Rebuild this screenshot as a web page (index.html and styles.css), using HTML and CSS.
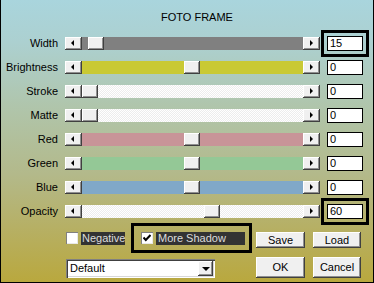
FILE: index.html
```html
<!DOCTYPE html>
<html>
<head>
<meta charset="utf-8">
<link rel="stylesheet" href="styles.css">
</head>
<body>
<div class="win">
  <div class="title">FOTO FRAME</div>
  <div class="rows">
    <div class="row">
      <div class="lbl">Width</div>
      <div class="slider">
        <div class="raised arrow"><span class="tri-l"></span></div>
        <div class="track t-gray"><div class="raised thumb" style="margin-left:6px"></div></div>
        <div class="raised arrow"><span class="tri-r"></span></div>
      </div>
      <div class="num hl">15</div>
    </div>
    <div class="row">
      <div class="lbl">Brightness</div>
      <div class="slider">
        <div class="raised arrow"><span class="tri-l"></span></div>
        <div class="track t-yellow"><div class="raised thumb" style="margin-left:102px"></div></div>
        <div class="raised arrow"><span class="tri-r"></span></div>
      </div>
      <div class="num">0</div>
    </div>
    <div class="row">
      <div class="lbl">Stroke</div>
      <div class="slider">
        <div class="raised arrow"><span class="tri-l"></span></div>
        <div class="track t-white"><div class="raised thumb" style="margin-left:0px"></div></div>
        <div class="raised arrow"><span class="tri-r"></span></div>
      </div>
      <div class="num">0</div>
    </div>
    <div class="row">
      <div class="lbl">Matte</div>
      <div class="slider">
        <div class="raised arrow"><span class="tri-l"></span></div>
        <div class="track t-white"><div class="raised thumb" style="margin-left:0px"></div></div>
        <div class="raised arrow"><span class="tri-r"></span></div>
      </div>
      <div class="num">0</div>
    </div>
    <div class="row">
      <div class="lbl">Red</div>
      <div class="slider">
        <div class="raised arrow"><span class="tri-l"></span></div>
        <div class="track t-red"><div class="raised thumb" style="margin-left:102px"></div></div>
        <div class="raised arrow"><span class="tri-r"></span></div>
      </div>
      <div class="num">0</div>
    </div>
    <div class="row">
      <div class="lbl">Green</div>
      <div class="slider">
        <div class="raised arrow"><span class="tri-l"></span></div>
        <div class="track t-green"><div class="raised thumb" style="margin-left:102px"></div></div>
        <div class="raised arrow"><span class="tri-r"></span></div>
      </div>
      <div class="num">0</div>
    </div>
    <div class="row">
      <div class="lbl">Blue</div>
      <div class="slider">
        <div class="raised arrow"><span class="tri-l"></span></div>
        <div class="track t-blue"><div class="raised thumb" style="margin-left:102px"></div></div>
        <div class="raised arrow"><span class="tri-r"></span></div>
      </div>
      <div class="num">0</div>
    </div>
    <div class="row">
      <div class="lbl">Opacity</div>
      <div class="slider">
        <div class="raised arrow"><span class="tri-l"></span></div>
        <div class="track t-white"><div class="raised thumb" style="margin-left:122px"></div></div>
        <div class="raised arrow"><span class="tri-r"></span></div>
      </div>
      <div class="num hl">60</div>
    </div>
  </div>
  <div class="bottom">
    <div class="left">
      <div class="cbrow">
        <div class="check"></div>
        <div class="cblabel neg">Negative</div>
        <div class="frame">
          <div class="check"><svg width="8" height="8" viewBox="0 0 8 8"><path d="M0.5 3.5 L2.8 6 L7.5 1" fill="none" stroke="#000" stroke-width="2"/></svg></div>
          <div class="cblabel more">More Shadow</div>
        </div>
      </div>
      <div class="combo">
        <span class="combo-text">Default</span>
        <div class="raised combo-btn"><span class="tri-d"></span></div>
      </div>
    </div>
    <div class="btns">
      <div class="raised pbtn">Save</div>
      <div class="raised pbtn">Load</div>
      <div class="raised pbtn">OK</div>
      <div class="raised pbtn">Cancel</div>
    </div>
  </div>
</div>
</body>
</html>
```

FILE: styles.css
```css
* { box-sizing: border-box; }
html, body { margin: 0; padding: 0; }
body {
  width: 374px;
  height: 283px;
  font-family: "Liberation Sans", Arial, sans-serif;
  font-size: 11px;
  color: #000;
  overflow: hidden;
}
.win {
  width: 374px;
  height: 283px;
  border: 1px solid #000;
  border-top: 0;
  background: linear-gradient(to bottom, #a9d5dd 0%, #acd0d0 15%, #b0c4a8 40%, #b3b98a 62%, #b6b066 80%, #b9a83e 100%);
}
.title {
  height: 31px;
  padding-top: 11px;
  padding-left: 20px;
  line-height: 13px;
  text-align: center;
}
.row {
  display: grid;
  grid-template-columns: 57px 255px 36px;
  column-gap: 7px;
  height: 24px;
  align-items: center;
}
.lbl { text-align: right; line-height: 13px; }
.slider { display: flex; height: 13px; }
.raised {
  background: #f0f0f0;
  box-shadow: inset -1px -1px #404040, inset 1px 1px #ffffff, inset -2px -2px #909090;
}
.arrow {
  width: 17px;
  height: 13px;
  flex: none;
  display: flex;
  align-items: center;
  justify-content: center;
}
.tri-l {
  width: 0; height: 0;
  border-top: 3px solid transparent;
  border-bottom: 3px solid transparent;
  border-right: 3px solid #000;
  margin-right: 2px;
}
.tri-r {
  width: 0; height: 0;
  border-top: 3px solid transparent;
  border-bottom: 3px solid transparent;
  border-left: 3px solid #000;
  margin-left: 0px;
}
.tri-d {
  width: 0; height: 0;
  border-left: 4px solid transparent;
  border-right: 4px solid transparent;
  border-top: 4px solid #000;
}
.track { flex: 1; display: flex; height: 13px; }
.thumb { width: 16px; height: 13px; flex: none; }
.t-gray { background: #808080; }
.t-yellow { background: #c9c934; }
.t-red { background: #c89498; }
.t-green { background: #94c896; }
.t-blue { background: #80a8c8; }
.t-white { background: repeating-conic-gradient(#ffffff 0 25%, #ededed 0 50%) 0 0 / 2px 2px; }
.num {
  height: 15px;
  background: #fff;
  border: 1px solid #000;
  padding-left: 2px;
  line-height: 13px;
}
.hl { position: relative; }
.hl::after {
  content: "";
  position: absolute;
  inset: -7px;
  border: 3px solid #000;
}
.bottom { display: flex; padding-left: 65px; }
.left { width: 187px; }
.cbrow { display: flex; align-items: center; height: 30px; }
.check {
  width: 12px;
  height: 12px;
  background: #fff;
  box-shadow: inset 1px 1px #808080, inset -1px -1px #e8e8e8;
  display: flex;
  align-items: center;
  justify-content: center;
  flex: none;
}
.cblabel {
  height: 13px;
  line-height: 13px;
  background: #333333;
  color: #dcdcdc;
  margin-left: 3px;
}
.neg { width: 44px; padding-left: 1px; }
.frame {
  margin-left: 6px;
  width: 121px;
  height: 30px;
  border: 3px solid #000;
  display: flex;
  align-items: center;
  padding-left: 7px;
}
.more { width: 89px; padding-left: 2px; }
.combo {
  margin-top: 6px;
  width: 149px;
  height: 19px;
  background: #fff;
  box-shadow: inset 1px 1px #808080, inset 2px 2px #404040, inset -1px -1px #ffffff, inset -2px -2px #d8d8d8;
  display: flex;
  align-items: center;
  padding: 2px 2px 2px 4px;
}
.combo-text { flex: 1; line-height: 13px; }
.combo-btn {
  width: 15px;
  height: 15px;
  display: flex;
  align-items: center;
  justify-content: center;
}
.btns {
  display: grid;
  grid-template-columns: 49px 48px;
  grid-template-rows: 16px 21px;
  column-gap: 8px;
  row-gap: 9px;
  margin-left: 3px;
  margin-top: 9px;
}
.pbtn {
  display: flex;
  align-items: center;
  justify-content: center;
  line-height: 13px;
}
```
